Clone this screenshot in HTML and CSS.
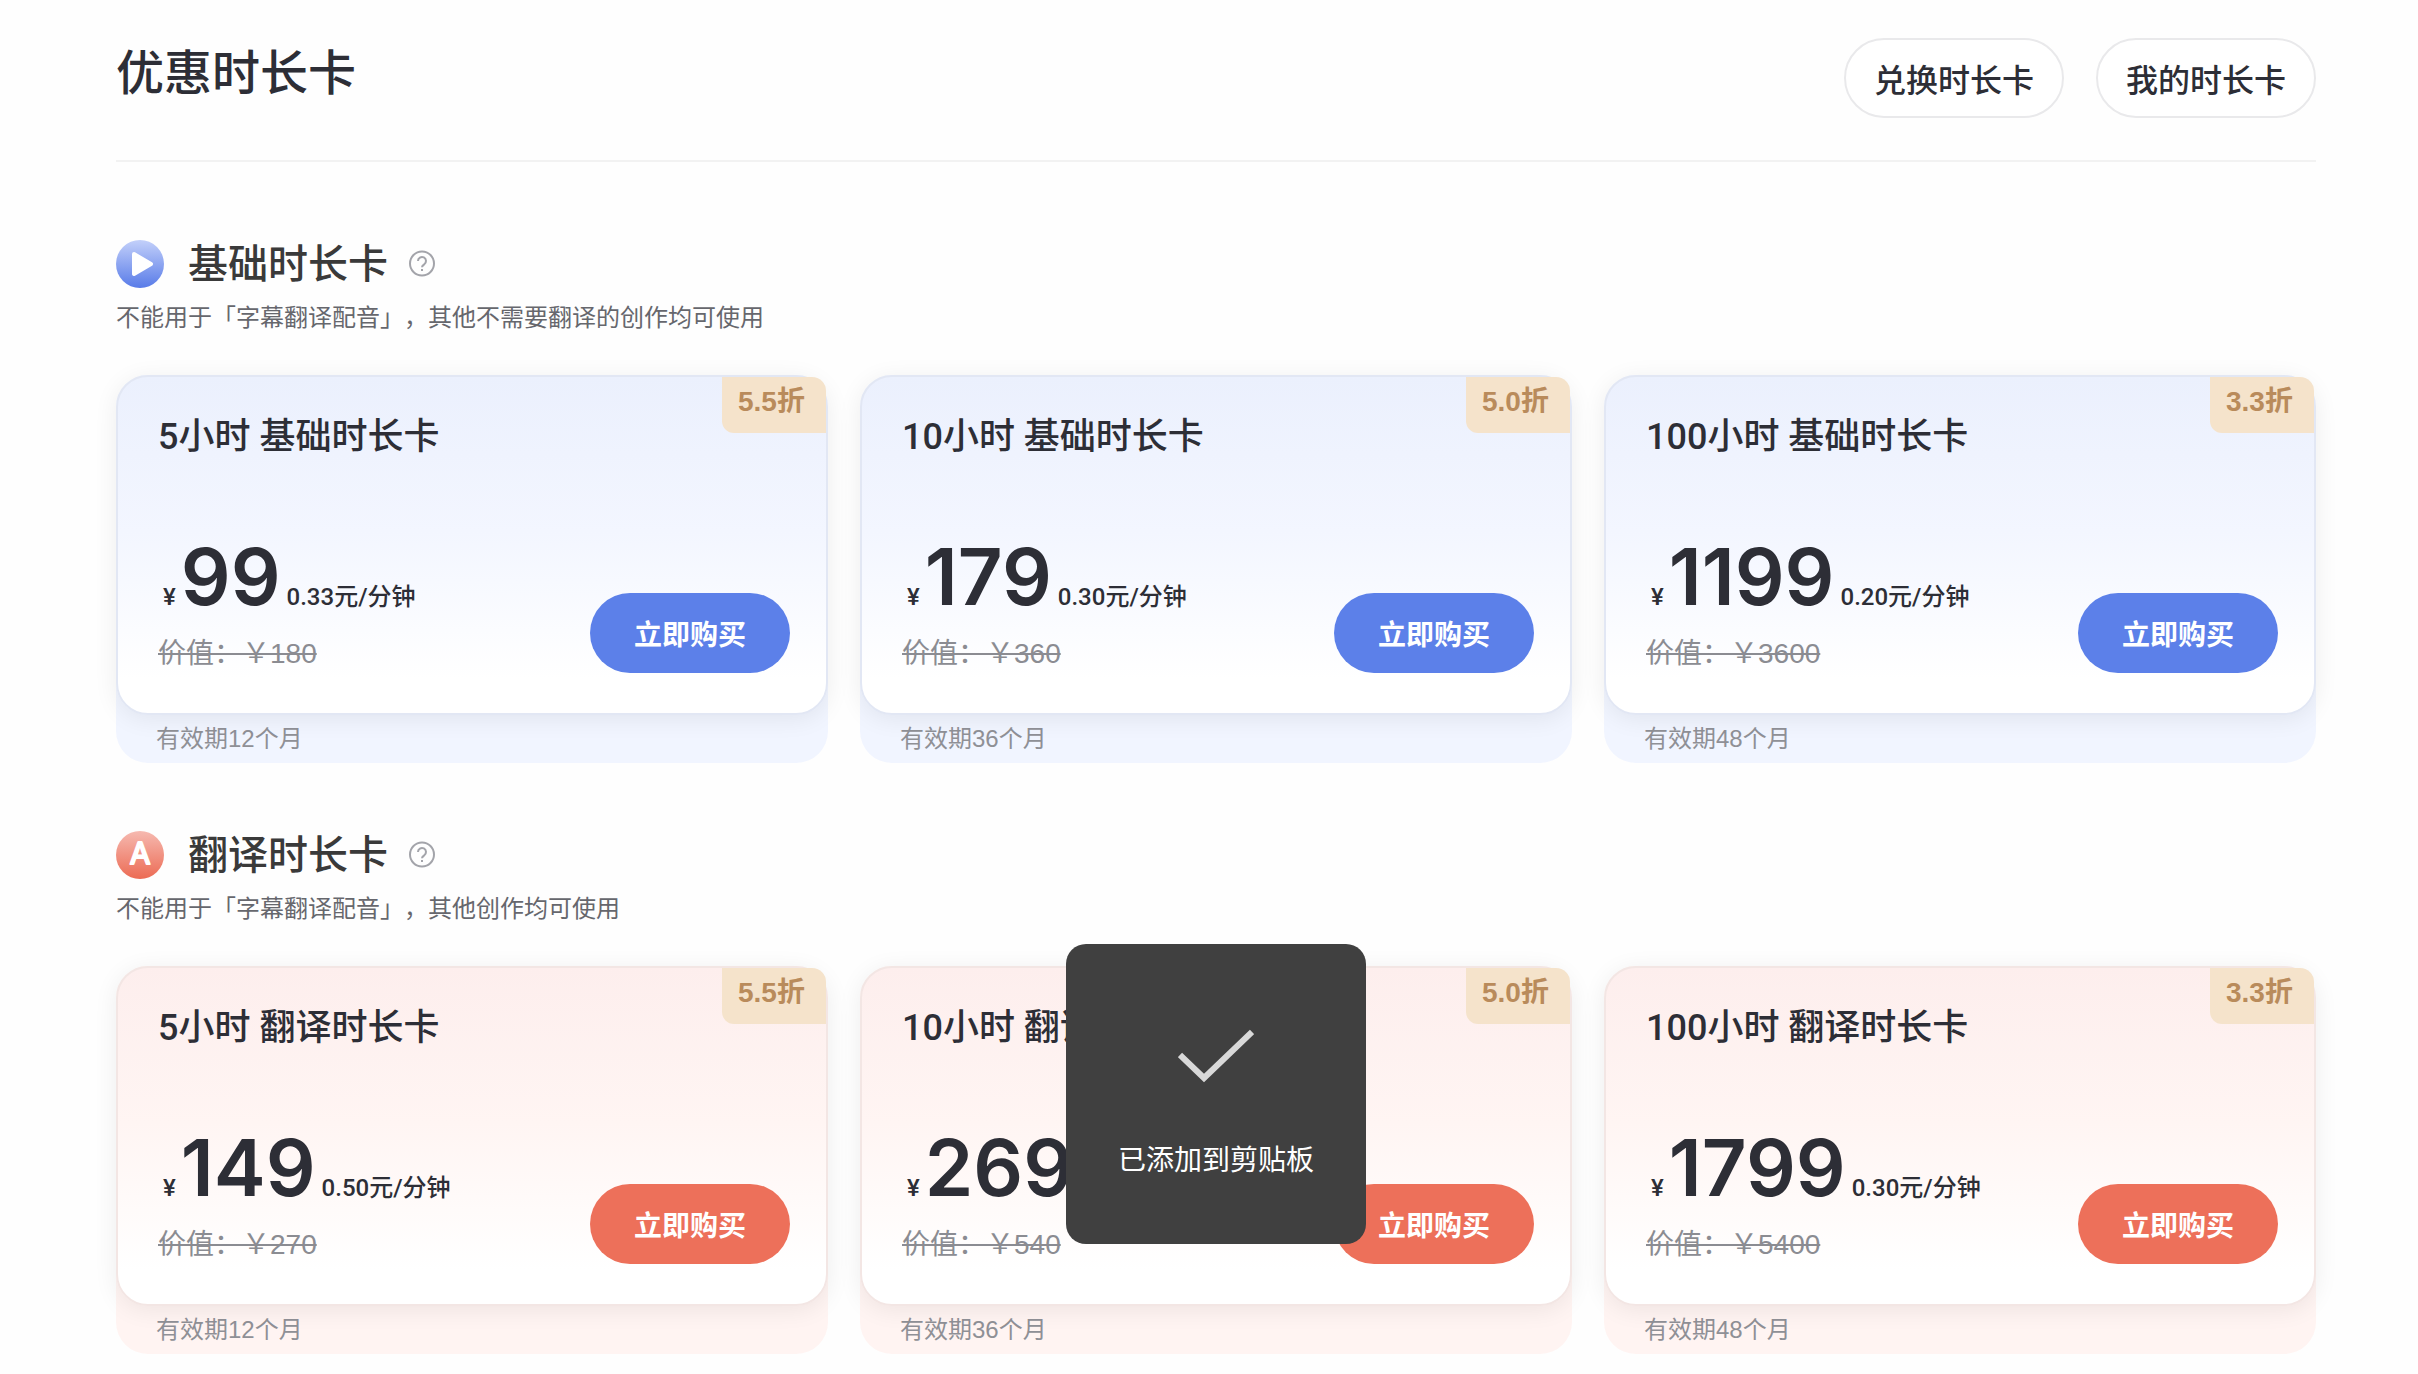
FILE: index.html
```
<!DOCTYPE html>
<html lang="zh-CN">
<head>
  <meta charset="UTF-8">
  <title>优惠时长卡</title>
  <link rel="stylesheet" href="styles.css">
</head>
<body>
  <main class="page">
    <header class="header">
      <h1>优惠时长卡</h1>
      <div class="header-actions">
        <button class="btn-outline" type="button">兑换时长卡</button>
        <button class="btn-outline" type="button">我的时长卡</button>
      </div>
    </header>

    <section class="section basic">
      <div class="section-title">
        <svg class="section-icon" viewBox="0 0 48 48" aria-hidden="true">
          <defs>
            <linearGradient id="blue" x1="0" y1="0" x2="0" y2="1">
              <stop offset="0" stop-color="#c3d0fa"/>
              <stop offset="1" stop-color="#587be8"/>
            </linearGradient>
          </defs>
          <circle cx="24" cy="24" r="24" fill="url(#blue)"/>
          <path d="M18 14 L35 24 L18 34 Z" fill="#fff" stroke="#fff" stroke-width="4" stroke-linejoin="round"/>
        </svg>
        <h2>基础时长卡</h2>
        <button class="help" type="button" aria-label="说明">
          <svg viewBox="0 0 28 28" aria-hidden="true">
            <circle cx="14" cy="13.5" r="12"/>
            <path d="M10 11a4 4 0 1 1 6.2 3.3c-1.5 1-2.2 1.6-2.2 3M14 19v2"/>
          </svg>
        </button>
      </div>
      <p class="section-desc">不能用于「字幕翻译配音」，其他不需要翻译的创作均可使用</p>
      <div class="cards">
        <article class="card">
          <div class="card-main">
            <span class="badge">5.5折</span>
            <h3>5小时 基础时长卡</h3>
            <div class="card-row">
              <div>
                <p class="price"><span class="yen">¥</span><strong>99</strong><span class="unit">0.33元/分钟</span></p>
                <del class="origin">价值：￥180</del>
              </div>
              <button class="buy" type="button">立即购买</button>
            </div>
          </div>
          <p class="validity">有效期12个月</p>
        </article>
        <article class="card">
          <div class="card-main">
            <span class="badge">5.0折</span>
            <h3>10小时 基础时长卡</h3>
            <div class="card-row">
              <div>
                <p class="price"><span class="yen">¥</span><strong>179</strong><span class="unit">0.30元/分钟</span></p>
                <del class="origin">价值：￥360</del>
              </div>
              <button class="buy" type="button">立即购买</button>
            </div>
          </div>
          <p class="validity">有效期36个月</p>
        </article>
        <article class="card">
          <div class="card-main">
            <span class="badge">3.3折</span>
            <h3>100小时 基础时长卡</h3>
            <div class="card-row">
              <div>
                <p class="price"><span class="yen">¥</span><strong>1199</strong><span class="unit">0.20元/分钟</span></p>
                <del class="origin">价值：￥3600</del>
              </div>
              <button class="buy" type="button">立即购买</button>
            </div>
          </div>
          <p class="validity">有效期48个月</p>
        </article>
      </div>
    </section>

    <section class="section translate">
      <div class="section-title">
        <svg class="section-icon" viewBox="0 0 48 48" aria-hidden="true">
          <defs>
            <linearGradient id="red" x1="0" y1="0" x2="0" y2="1">
              <stop offset="0" stop-color="#f6b9b0"/>
              <stop offset="1" stop-color="#ec6b54"/>
            </linearGradient>
          </defs>
          <circle cx="24" cy="24" r="24" fill="url(#red)"/>
          <text class="icon-letter" x="24" y="33" text-anchor="middle">A</text>
        </svg>
        <h2>翻译时长卡</h2>
        <button class="help" type="button" aria-label="说明">
          <svg viewBox="0 0 28 28" aria-hidden="true">
            <circle cx="14" cy="13.5" r="12"/>
            <path d="M10 11a4 4 0 1 1 6.2 3.3c-1.5 1-2.2 1.6-2.2 3M14 19v2"/>
          </svg>
        </button>
      </div>
      <p class="section-desc">不能用于「字幕翻译配音」，其他创作均可使用</p>
      <div class="cards">
        <article class="card">
          <div class="card-main">
            <span class="badge">5.5折</span>
            <h3>5小时 翻译时长卡</h3>
            <div class="card-row">
              <div>
                <p class="price"><span class="yen">¥</span><strong>149</strong><span class="unit">0.50元/分钟</span></p>
                <del class="origin">价值：￥270</del>
              </div>
              <button class="buy" type="button">立即购买</button>
            </div>
          </div>
          <p class="validity">有效期12个月</p>
        </article>
        <article class="card">
          <div class="card-main">
            <span class="badge">5.0折</span>
            <h3>10小时 翻译时长卡</h3>
            <div class="card-row">
              <div>
                <p class="price"><span class="yen">¥</span><strong>269</strong></p>
                <del class="origin">价值：￥540</del>
              </div>
              <button class="buy" type="button">立即购买</button>
            </div>
          </div>
          <p class="validity">有效期36个月</p>
        </article>
        <article class="card">
          <div class="card-main">
            <span class="badge">3.3折</span>
            <h3>100小时 翻译时长卡</h3>
            <div class="card-row">
              <div>
                <p class="price"><span class="yen">¥</span><strong>1799</strong><span class="unit">0.30元/分钟</span></p>
                <del class="origin">价值：￥5400</del>
              </div>
              <button class="buy" type="button">立即购买</button>
            </div>
          </div>
          <p class="validity">有效期48个月</p>
        </article>
      </div>
    </section>

    <div class="toast" role="status">
      <svg viewBox="0 0 76 54" aria-hidden="true">
        <path d="M2 26 L26 49 L74 3"/>
      </svg>
      <span>已添加到剪贴板</span>
    </div>
  </main>
</body>
</html>
```
FILE: styles.css
```
* { box-sizing: border-box; }
body {
  margin: 0;
  background: #fefefe;
  color: #2d2e36;
  font-family: "Liberation Sans", "Noto Sans CJK SC", sans-serif;
  text-spacing-trim: space-all;
}
h1, h2, h3, p { margin: 0; font-weight: 500; }
button { font-family: inherit; cursor: pointer; }

.page {
  position: relative;
  margin: 0 102px 0 116px;
}

.header {
  display: flex;
  justify-content: space-between;
  align-items: flex-start;
  padding: 38px 0 42px;
  border-bottom: 2px solid #f2f2f2;
}
.header h1 {
  font-size: 48px;
  line-height: 72px;
}
.header-actions {
  display: flex;
  gap: 32px;
}
.btn-outline {
  width: 220px;
  height: 80px;
  background: #fff;
  border: 2px solid #e9e9eb;
  border-radius: 40px;
  color: #2d2e36;
  font-size: 32px;
  font-weight: 500;
}

.section { padding-top: 68px; }
.header + .section { padding-top: 78px; }
.section-title {
  display: flex;
  align-items: center;
  height: 48px;
}
.section-icon {
  width: 48px;
  height: 48px;
  margin-right: 24px;
}
.icon-letter {
  font-family: Inter, sans-serif;
  font-size: 30px;
  font-weight: 400;
  fill: #fff;
  stroke: #fff;
  stroke-width: 2px;
  stroke-linejoin: round;
}
.section-title h2 {
  color: #3a3a3a;
  font-size: 40px;
  line-height: 48px;
}
.help {
  width: 28px;
  height: 28px;
  margin-left: 20px;
  padding: 0;
  background: none;
  border: none;
}
.help svg {
  display: block;
  fill: none;
  stroke: #a3a4aa;
  stroke-width: 2;
}
.section-desc {
  margin: 12px 0 39px;
  color: #66676d;
  font-size: 24px;
  font-weight: 400;
  line-height: 36px;
}

.cards {
  display: grid;
  grid-template-columns: repeat(3, 1fr);
  gap: 32px;
}
.card {
  border-radius: 32px;
  background: #f1f5ff;
}
.card-main {
  position: relative;
  padding: 34px 36px 40px 40px;
  border: 2px solid #e2e7f4;
  border-radius: 32px;
  background: linear-gradient(#ebf0fd, #f3f6ff 46%, #fff 90%);
  box-shadow: 0 4px 24px rgba(0, 0, 0, 0.07);
}
.card h3 {
  font-family: Roboto, "Noto Sans CJK SC", sans-serif;
  font-size: 36px;
  line-height: 52px;
}
.badge {
  position: absolute;
  top: 0;
  right: 0;
  width: 104px;
  height: 56px;
  padding-left: 16px;
  background: #f5e3cb;
  border-radius: 0 14px 0 12px;
  color: #b98b5b;
  font-size: 28px;
  font-weight: bold;
  line-height: 50px;
}
.card-row {
  display: flex;
  justify-content: space-between;
  align-items: flex-end;
  margin-top: 72px;
}
.price {
  display: flex;
  align-items: baseline;
  padding-left: 5px;
  font-family: Roboto, "Noto Sans CJK SC", sans-serif;
  line-height: 24px;
}
.price strong {
  margin: 0 6px 0 5px;
  font-family: Inter, sans-serif;
  font-size: 78px;
  font-weight: 600;
  line-height: 84px;
}
.yen {
  font-size: 24px;
}
.unit { font-size: 24px; }
.origin {
  display: block;
  margin-top: 16px;
  color: #8b8c92;
  font-size: 28px;
  line-height: 38px;
}
.buy {
  width: 200px;
  height: 80px;
  background: #5c80e9;
  border: none;
  border-radius: 40px;
  color: #fff;
  font-size: 28px;
  font-weight: bold;
}
.validity {
  padding-left: 40px;
  color: #8f9096;
  font-size: 24px;
  font-weight: 400;
  line-height: 48px;
}

.translate .card { background: #fff4f2; }
.translate .card-main {
  border-color: #f3e6e4;
  background: linear-gradient(#fdeeed, #fff5f3 46%, #fff 90%);
}
.translate .buy { background: #ed705a; }

.toast {
  position: absolute;
  top: 944px;
  left: 50%;
  display: flex;
  flex-direction: column;
  align-items: center;
  width: 300px;
  height: 300px;
  margin-left: -150px;
  padding-top: 85px;
  background: #404040;
  border-radius: 20px;
  color: #fff;
  font-size: 28px;
  line-height: 40px;
}
.toast svg {
  width: 76px;
  height: 54px;
  margin-bottom: 58px;
  fill: none;
  stroke: #d9d9d9;
  stroke-width: 6;
}
```
